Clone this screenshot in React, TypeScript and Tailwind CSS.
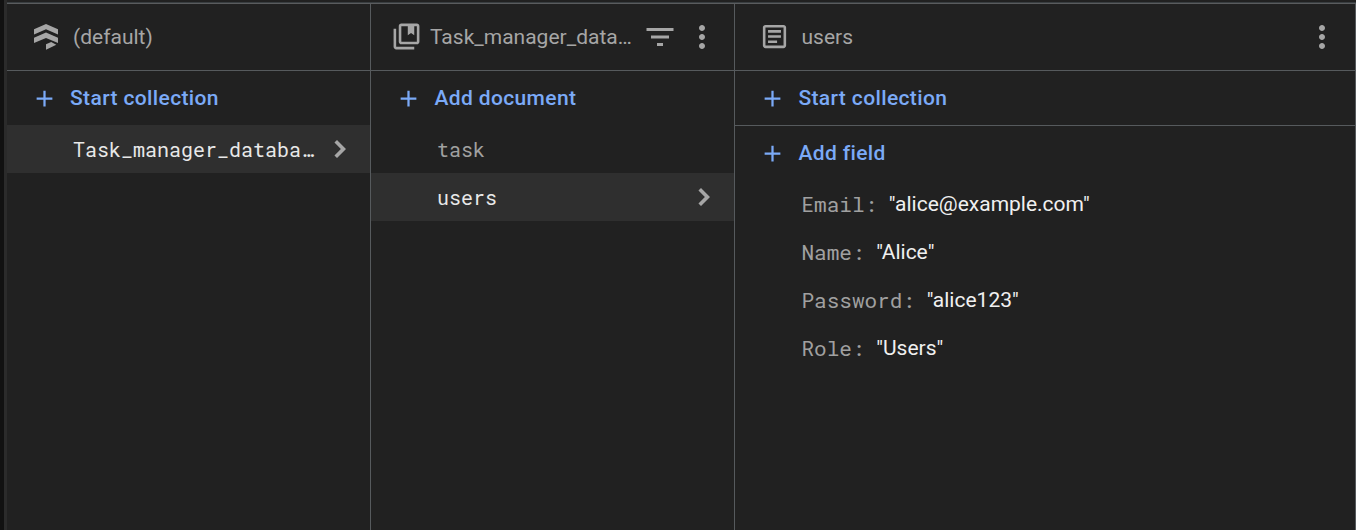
import type { ReactNode } from "react";

const mono = "font-['Roboto_Mono','DejaVu_Sans_Mono',monospace]";

function Icon({ d, className }: { d: string; className: string }) {
  return (
    <svg viewBox="0 0 24 24" fill="currentColor" className={`shrink-0 ${className}`}>
      <path d={d} />
    </svg>
  );
}

const PLUS = "M19 13h-6v6h-2v-6H5v-2h6V5h2v6h6v2z";
const CHEVRON = "M10 6L8.3 7.7 12.6 12l-4.3 4.300L10 18l6-6z";
const FILTER = "M10 18h4v-2h-4v2zM3 6v2h18V6H3zm3 7h12v-2H6v2z";
const MORE =
  "M12 8c1.1 0 2-.9 2-2s-.9-2-2-2-2 .9-2 2 .9 2 2 2zm0 2c-1.1 0-2 .9-2 2s.9 2 2 2 2-.9 2-2-.9-2-2-2zm0 6c-1.1 0-2 .9-2 2s.9 2 2 2 2-.9 2-2-.9-2-2-2z";
const BOOKMARKS =
  "M4 6H2v14c0 1.1.9 2 2 2h14v-2H4V6zM20 2H8c-1.1 0-2 .9-2 2v12c0 1.1.9 2 2 2h12c1.1 0 2-.9 2-2V4c0-1.1-.9-2-2-2zm0 14H8V4h5v7l2.500-1.700L18 11V4h2v12z";
const ARTICLE =
  "M19 5v14H5V5h14m0-2H5c-1.100 0-2 .9-2 2v14c0 1.100.9 2 2 2h14c1.100 0 2-.9 2-2V5c0-1.100-.9-2-2-2zM14 17H7v-2h7v2zm3-4H7v-2h10v2zm0-4H7V7h10v2z";

function Logo() {
  return (
    <svg viewBox="0 0 24 26" fill="currentColor" className="h-[26px] w-6 shrink-0">
      <path d="M12 0L24 5.200V10.500L12 5.300L0 10.500V5.200z" />
      <path d="M12 8.600L24 13.800V19.100L12 13.900L0 19.100V13.800z" />
      <path d="M12 20.300L17.200 18L22.300 20.800L12 25.700z" />
    </svg>
  );
}

function Header({ children }: { children: ReactNode }) {
  return (
    <div className="flex h-[67px] items-center border-b border-[#565a5d] text-[21px] leading-[30px] text-[#a6a6a6]">
      {children}
    </div>
  );
}

function Action({ label }: { label: string }) {
  return (
    <button className="flex h-[54px] w-full items-center pl-6 text-[21px] leading-[30px] font-medium tracking-[0.375px] text-[#7baaf7]">
      <Icon d={PLUS} className="mt-px mr-3 size-[27px]" />
      {label}
    </button>
  );
}

function Row({ label, selected }: { label: string; selected?: boolean }) {
  return (
    <div
      className={`flex h-12 items-center pl-[66px] text-[20px] leading-[30px] ${mono} ${
        selected ? "bg-[#2f2f2f] font-[450] text-[#e8e8e8]" : "text-[#a0a0a0]"
      }`}
    >
      <span className="flex-1 whitespace-nowrap">{label}</span>
      {selected && <Icon d={CHEVRON} className="mr-3 size-9 text-[#a6a6a6]" />}
    </div>
  );
}

function Field({ name, value }: { name: string; value: string }) {
  return (
    <div className="flex h-12 items-center pl-[66.500px] text-[21px] leading-[30px]">
      <span className={`mr-[11.700px] text-[21px] text-[#a0a0a0] ${mono}`}>{name}:</span>
      <span className="text-[#f0f0f0]">"{value}"</span>
    </div>
  );
}

export default function App() {
  return (
    <div className="flex h-[530px] w-[1356px] overflow-hidden bg-[#212121] font-['Roboto',sans-serif]">
      <div className="w-1 bg-[#111111]" />
      <div className="w-[3px] bg-[#2b2b2b]" />
      <div className="flex flex-1 flex-col">
        <div className="h-0.5" />
        <div className="h-0.5 border-b border-[#5a5c5e] bg-[#393e41]" />
        <div className="flex flex-1 border-r border-[#565a5d]">
          <section className="w-[364px] border-r border-[#565a5d]">
            <Header>
              <div className="ml-[27px] mr-[15px]"><Logo /></div>
              <span>(default)</span>
            </Header>
            <Action label="Start collection" />
            <Row label="Task_manager_databa…" selected />
          </section>
          <section className="w-[364px] border-r border-[#565a5d]">
            <Header>
              <Icon d={BOOKMARKS} className="ml-5 mr-2 mb-px size-[31px]" />
              <span className="w-[211.500px]">Task_manager_data…</span>
              <Icon d={FILTER} className="size-9" />
              <Icon d={MORE} className="ml-1.5 size-9" />
            </Header>
            <div className="pl-[0.400px]">
              <Action label="Add document" />
            </div>
            <Row label="task" />
            <Row label="users" selected />
          </section>
          <section className="flex-1">
            <Header>
              <Icon d={ARTICLE} className="ml-6 mr-[11.500px] mb-px size-[31px]" />
              <span className="flex-1">users</span>
              <Icon d={MORE} className="mr-[15px] size-9" />
            </Header>
            <div className="border-b border-[#565a5d] pl-[0.400px]">
              <Action label="Start collection" />
            </div>
            <div className="pl-[0.400px]">
              <Action label="Add field" />
            </div>
            <Field name="Email" value="alice@example.com" />
            <Field name="Name" value="Alice" />
            <Field name="Password" value="alice123" />
            <Field name="Role" value="Users" />
          </section>
        </div>
      </div>
    </div>
  );
}
